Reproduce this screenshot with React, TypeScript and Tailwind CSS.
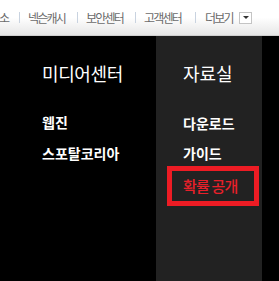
import React from "react";

const Sep = () => <span className="block w-px h-[11px] bg-[#c9d3e0]" />;

export default function App() {
  return (
    <div
      className="w-[279px] h-[281px] bg-black overflow-hidden flex flex-col"
      style={{ fontFamily: '"Noto Sans CJK KR", "Noto Sans", sans-serif' }}
    >
      <div className="h-[36px] shrink-0 bg-gradient-to-b from-white via-white to-[#e6e6e6] border-b border-[#cfcfcf] flex items-center text-[12px] leading-[12px] tracking-[-1.8px] text-[#6b6b6b] whitespace-nowrap">
        <span className="w-[20px] ml-[-1px] pt-[1px]">소</span>
        <Sep />
        <span className="ml-[8px] w-[49px] pt-[1px]">넥슨캐시</span>
        <Sep />
        <span className="ml-[8px] w-[49px] pt-[1px]">보안센터</span>
        <Sep />
        <span className="ml-[8px] w-[51px] pt-[1px]">고객센터</span>
        <Sep />
        <span className="ml-[9px] w-[34px] pt-[1px]">더보기</span>
        <span className="w-[13px] h-[12px] border border-[#c4c4c4] bg-white flex items-center justify-center">
          <span className="block w-0 h-0 border-l-[3px] border-r-[3px] border-t-[3px] border-l-transparent border-r-transparent border-t-[#333]" />
        </span>
      </div>
      <div className="flex flex-1">
        <div className="w-[156px] pl-[42px] pt-[28px] text-white">
          <div className="text-[18px] leading-[18px] tracking-[-0.4px]">미디어센터</div>
          <div className="mt-[33px] text-[14px] leading-[14px] font-bold">웹진</div>
          <div className="mt-[17px] text-[14px] leading-[14px] font-bold">스포탈코리아</div>
        </div>
        <div className="w-[106px] bg-[#222222] pl-[11px] pt-[28px] text-white">
          <div className="pl-[16px] text-[18px] leading-[18px]">자료실</div>
          <div className="pl-[16px] mt-[34px] text-[14px] leading-[14px] font-bold">다운로드</div>
          <div className="pl-[16px] mt-[16px] text-[14px] leading-[14px] font-bold">가이드</div>
          <div className="mt-[6px] w-[92px] h-[40px] border-[5px] border-[#ed1c24] flex items-center pl-[11px]">
            <span className="text-[15px] leading-[15px] font-medium tracking-[-0.8px] text-[#e8202a] mt-[-1px]">확률 공개</span>
          </div>
        </div>
        <div className="flex-1 bg-black" />
      </div>
    </div>
  );
}
